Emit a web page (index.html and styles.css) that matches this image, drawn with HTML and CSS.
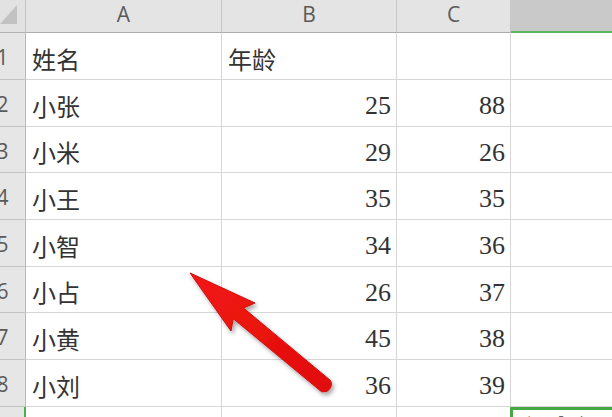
FILE: index.html
```html
<!DOCTYPE html>
<html lang="zh">
<head>
<meta charset="utf-8">
<link rel="stylesheet" href="styles.css">
</head>
<body>
<div class="sheet">
  <div class="grid">
    <div class="corner"><span class="tri"></span></div>
    <div class="colhead">A</div>
    <div class="colhead">B</div>
    <div class="colhead">C</div>
    <div class="colhead sel"></div>

    <div class="rowhead">1</div>
    <div class="cell txt">姓名</div>
    <div class="cell txt">年龄</div>
    <div class="cell"></div>
    <div class="cell"></div>

    <div class="rowhead">2</div>
    <div class="cell txt">小张</div>
    <div class="cell num">25</div>
    <div class="cell num">88</div>
    <div class="cell"></div>

    <div class="rowhead">3</div>
    <div class="cell txt">小米</div>
    <div class="cell num">29</div>
    <div class="cell num">26</div>
    <div class="cell"></div>

    <div class="rowhead">4</div>
    <div class="cell txt">小王</div>
    <div class="cell num">35</div>
    <div class="cell num">35</div>
    <div class="cell"></div>

    <div class="rowhead">5</div>
    <div class="cell txt">小智</div>
    <div class="cell num">34</div>
    <div class="cell num">36</div>
    <div class="cell"></div>

    <div class="rowhead">6</div>
    <div class="cell txt">小占</div>
    <div class="cell num">26</div>
    <div class="cell num">37</div>
    <div class="cell"></div>

    <div class="rowhead">7</div>
    <div class="cell txt">小黄</div>
    <div class="cell num">45</div>
    <div class="cell num">38</div>
    <div class="cell"></div>

    <div class="rowhead">8</div>
    <div class="cell txt">小刘</div>
    <div class="cell num">36</div>
    <div class="cell num">39</div>
    <div class="cell"></div>

    <div class="rowhead selrow">9</div>
    <div class="cell"></div>
    <div class="cell"></div>
    <div class="cell"></div>
    <div class="cell selcell"><span class="tip">孙 o 题 行 ii</span></div>
  </div>

  <svg class="arrow" width="612" height="417" viewBox="0 0 612 417" aria-hidden="true">
    <defs>
      <filter id="sh" x="-20%" y="-20%" width="140%" height="140%">
        <feDropShadow dx="2" dy="3" stdDeviation="2.2" flood-color="#000" flood-opacity="0.35"/>
      </filter>
      <linearGradient id="rg" x1="0" y1="0" x2="1" y2="1">
        <stop offset="0" stop-color="#f21a14"/>
        <stop offset="1" stop-color="#e10b0b"/>
      </linearGradient>
    </defs>
    <path d="M190 273 L255 303 L243.5 308 L330.5 380.5 Q333.5 386 327 391.5 L321.6 391.8 L233.2 318.6 L231 331 Z"
          fill="url(#rg)" stroke="#d30a0a" stroke-width="1" stroke-linejoin="round" filter="url(#sh)"/>
  </svg>
</div>
</body>
</html>
```
FILE: styles.css
```css
* { box-sizing: border-box; }

html, body {
  margin: 0;
  padding: 0;
  width: 612px;
  height: 417px;
  overflow: hidden;
  background: #ffffff;
}

.sheet {
  position: relative;
  width: 612px;
  height: 417px;
  overflow: hidden;
}

.grid {
  display: grid;
  margin-left: -20px;
  width: 660px;
  grid-template-columns: 46px 196px 175px 114px 129px;
  grid-template-rows: 33px 47px 47px 46px 47px 47px 46px 47px 47px 47px;
  font-family: "Noto Sans CJK SC", "Noto Sans", sans-serif;
}

.corner {
  background: #e2e2e2;
  border-right: 1px solid #c4c4c4;
  border-bottom: 1px solid #b3b3b3;
  display: flex;
  justify-content: flex-end;
  align-items: flex-end;
  padding: 0 8px 8px 0;
}

.tri {
  width: 0;
  height: 0;
  border-left: 17px solid transparent;
  border-bottom: 19px solid #c2c2c2;
}

.colhead {
  background: #e4e4e4;
  border-right: 1px solid #c6c6c6;
  border-bottom: 1px solid #adadad;
  display: flex;
  align-items: center;
  justify-content: center;
  padding-bottom: 4px;
  font-family: "Open Sans", "Liberation Sans", sans-serif;
  font-size: 21px;
  color: #5a5a5a;
}

.colhead.sel {
  background: #c9c9c9;
  border-bottom: 2px solid #5cb85c;
}

.rowhead {
  background: #e6e6e6;
  border-right: 1px solid #b9b9b9;
  border-bottom: 1px solid #c4c4c4;
  display: flex;
  align-items: center;
  justify-content: center;
  padding-top: 2px;
  font-family: "Open Sans", "Liberation Sans", sans-serif;
  font-size: 21px;
  color: #5a5a5a;
}

.rowhead.selrow {
  border-right: 2px solid #4caf50;
}

.cell {
  border-right: 1px solid #d6d6d6;
  border-bottom: 1px solid #d6d6d6;
  display: flex;
  align-items: center;
  color: #333333;
}

.cell.txt {
  padding: 4px 0 0 6px;
  font-size: 24px;
}

.cell.num {
  justify-content: flex-end;
  padding: 6px 5px 0 0;
  font-family: "Liberation Serif", "Noto Sans CJK SC", serif;
  font-size: 26px;
}

.cell.selcell {
  border-top: 3px solid #45a845;
  border-left: 3px solid #45a845;
  align-items: flex-start;
  padding: 3px 0 0 8px;
  margin-left: -1px;
}

.tip {
  font-size: 12px;
  color: #444;
  letter-spacing: 3px;
}

.arrow {
  position: absolute;
  left: 0;
  top: 0;
  pointer-events: none;
}
```
